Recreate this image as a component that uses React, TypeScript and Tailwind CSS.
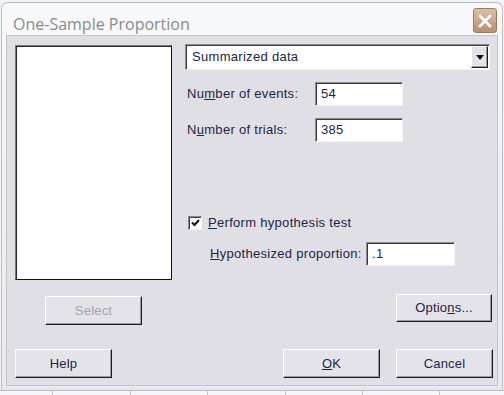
import React from 'react';

const btn =
  "flex items-center justify-center bg-[#e4e3e9] border border-t-white border-l-white border-r-[#1c1c1c] border-b-[#1c1c1c] shadow-[inset_-1px_-1px_0_#9c9ba2] text-[13px] tracking-[0.2px] text-[#1e2447]";

const sunken =
  "bg-white border border-t-[#8a8a90] border-l-[#8a8a90] border-r-[#f4f4f6] border-b-[#f4f4f6] shadow-[inset_1px_1px_0_#3c3c40]";

const label = "text-[13px] tracking-[0.3px] text-[#1e2447]";

function Field({ value, w }: { value: string; w: string }) {
  return (
    <div className={`${sunken} ${w} h-[24px] flex items-center pl-[5px] ${label}`}>
      {value}
    </div>
  );
}

export default function App() {
  return (
    <div className="w-[504px] h-[395px] overflow-hidden bg-[#f3f4f6] font-['Liberation_Sans',Arial,sans-serif] flex flex-col">
      {/* Window frame */}
      <div className="mx-[1px] mt-[2px] rounded-t-[7px] border border-b-0 border-[#b9bdc4] bg-gradient-to-b from-[#f8f9fb] to-[#e7e9ee] px-[4px] pb-[4px]">
        {/* Title bar */}
        <div className="h-[32px] flex items-start justify-between">
          <span className="pl-[7px] pt-[12px] text-[16px] leading-[18px] text-[#8a8a92] font-['Open_Sans',sans-serif]">
            One-Sample Proportion
          </span>
          <div className="mt-[5px] mr-[1px] w-[24px] h-[25px] rounded-[3px] border border-[#9c7a5e] bg-gradient-to-b from-[#dcc2aa] to-[#b98f6f] flex items-center justify-center">
            <svg width="14" height="14" viewBox="0 0 14 14">
              <path d="M2 2 L12 12 M12 2 L2 12" stroke="white" strokeWidth="2.6" strokeLinecap="square" />
            </svg>
          </div>
        </div>

        {/* Client area */}
        <div className="h-[351px] bg-[#e0dfe5] border border-[#c3c5cc] pl-[8px] pt-[8px] flex flex-col">
          <div className="flex h-[281px]">
            {/* Left column */}
            <div className="w-[157px] pt-[1px] flex flex-col">
              <div className="h-[235px] bg-white border border-t-[#77777c] border-l-[#77777c] border-r-[#111] border-b-[#111] shadow-[inset_1px_1px_0_#2a2a2a]" />
              <div className={`${btn} mt-[16px] ml-[30px] w-[97px] h-[29px] text-[#a4a4ac]`}>Select</div>
            </div>

            {/* Right column */}
            <div className="ml-[13px] w-[305px] flex flex-col">
              <div className={`${sunken} h-[26px] flex items-center justify-between`}>
                <span className={`pl-[6px] ${label}`}>Summarized data</span>
                <div className={`${btn} w-[17px] h-[22px] mr-[1px]`}>
                  <svg width="8" height="5" viewBox="0 0 8 5">
                    <path d="M0 0 H8 L4 5 Z" fill="#111" />
                  </svg>
                </div>
              </div>

              <div className="mt-[12px] flex items-center">
                <span className={`w-[130px] pl-[2px] ${label}`}>
                  Nu<u>m</u>ber of events:
                </span>
                <Field value="54" w="w-[88px]" />
              </div>
              <div className="mt-[12px] flex items-center">
                <span className={`w-[130px] pl-[2px] ${label}`}>
                  N<u>u</u>mber of trials:
                </span>
                <Field value="385" w="w-[88px]" />
              </div>

              <div className="mt-[71px] flex items-center">
                <div className={`${sunken} ml-[3px] w-[14px] h-[14px] flex items-center justify-center`}>
                  <svg width="9" height="8" viewBox="0 0 9 8">
                    <path d="M1 3.5 L3.5 6 L8 1" stroke="#111" strokeWidth="2" fill="none" />
                  </svg>
                </div>
                <span className={`ml-[6px] ${label}`}>
                  <u>P</u>erform hypothesis test
                </span>
              </div>
              <div className="mt-[9px] flex items-center">
                <span className={`w-[181px] pl-[25px] ${label}`}>
                  <u>H</u>ypothesized proportion:
                </span>
                <Field value=".1" w="w-[89px]" />
              </div>

              <div className={`${btn} mt-[28px] ml-[211px] w-[96px] h-[28px]`}>
                Optio<u>n</u>s...
              </div>
            </div>
          </div>

          {/* Bottom buttons */}
          <div className="mt-[24px] flex">
            <div className={`${btn} w-[97px] h-[29px]`}>Help</div>
            <div className={`${btn} ml-[171px] w-[97px] h-[29px]`}>
              <u>O</u>K
            </div>
            <div className={`${btn} ml-[16px] w-[97px] h-[29px]`}>Cancel</div>
          </div>
        </div>
      </div>

      {/* Sheet behind the dialog */}
      <div className="flex-1 flex border-t border-[#b8bbc2] bg-[#f6f6f8]">
        <div className="w-[52px]" />
        <div className="w-[78px] border-l border-[#c4c4c8]" />
        <div className="w-[77px] border-l border-[#c4c4c8]" />
        <div className="w-[78px] border-l border-[#c4c4c8]" />
        <div className="w-[77px] border-l border-[#c4c4c8]" />
        <div className="w-[77px] border-l border-[#c4c4c8]" />
        <div className="flex-1 border-l border-[#c4c4c8]" />
      </div>
    </div>
  );
}
